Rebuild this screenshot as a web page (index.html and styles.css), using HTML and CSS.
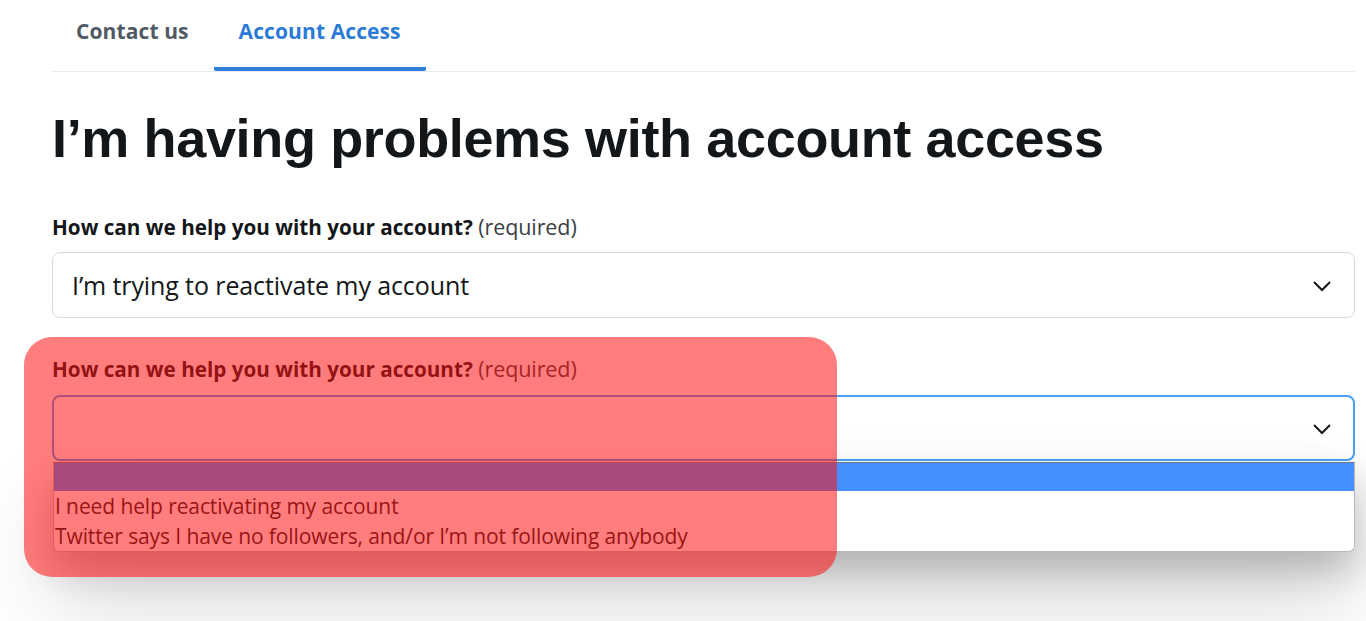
FILE: index.html
```html
<!DOCTYPE html>
<html lang="en">
    <head>
        <meta charset="utf-8">
        <link rel="stylesheet" href="styles.css">
    </head>
    <body>
        <div class="page">
            <nav class="tabs">
                <a href="#" class="tab">Contact us</a>
                <a href="#" class="tab active">Account Access</a>
            </nav>

            <h1 class="title">I’m having problems with account access</h1>

            <div class="field">
                <label class="label"><b>How can we help you with your account?</b> (required)</label>
                <div class="select">
                    <span class="value">I’m trying to reactivate my account</span>
                    <svg class="chevron" width="20" height="12" viewBox="0 0 20 12"><path d="M2 2 L10 10 L18 2" fill="none" stroke="#14171a" stroke-width="2"/></svg>
                </div>
            </div>

            <div class="field open">
                <label class="label"><b>How can we help you with your account?</b> (required)</label>
                <div class="select focus">
                    <span class="value"></span>
                    <svg class="chevron" width="20" height="12" viewBox="0 0 20 12"><path d="M2 2 L10 10 L18 2" fill="none" stroke="#14171a" stroke-width="2"/></svg>
                </div>
                <ul class="options">
                    <li class="current"></li>
                    <li>I need help reactivating my account</li>
                    <li>Twitter says I have no followers, and/or I’m not following anybody</li>
                </ul>
            </div>

            <div class="mark"></div>
        </div>
    </body>
</html>
```

FILE: styles.css
```css
* {
    margin: 0;
    padding: 0;
    box-sizing: border-box;
}
html, body {
    height: 100%;
}
body {
    background: #fff;
    font-family: "Open Sans", "Noto Sans", sans-serif;
    color: #14171a;
}
ul {
    list-style: none;
}
.page {
    position: relative;
    min-height: 100%;
    padding: 0 11px 0 52px;
}
.tabs {
    display: flex;
    border-bottom: 1px solid #e6ecf0;
}
.tab {
    display: block;
    padding: 16px 25px 21px 24px;
    font-size: 21px;
    line-height: 30px;
    font-weight: 700;
    color: #4f5a65;
    text-decoration: none;
    border-bottom: 4px solid transparent;
    letter-spacing: 0.1px;
}
.tab.active {
    padding-left: 25px;
    color: #2b7bd6;
    border-bottom-color: #2e7dd7;
    border-radius: 0 0 2px 2px;
}
.title {
    margin-top: 34px;
    font-family: "Liberation Sans", Arial, sans-serif;
    font-size: 54px;
    line-height: 64px;
    letter-spacing: -0.35px;
    font-weight: 700;
    color: #14171a;
}
.field {
    margin-top: 44px;
}
.field + .field {
    margin-top: 38px;
}
.label {
    display: block;
    font-size: 21.5px;
    line-height: 26px;
    color: #3a4046;
    letter-spacing: -0.1px;
}
.label b {
    color: #14171a;
    font-size: 20.7px;
    letter-spacing: 0;
}
.select {
    display: flex;
    align-items: center;
    justify-content: space-between;
    height: 66px;
    margin-top: 12px;
    padding: 0 22px 0 19px;
    border: 1px solid #d4dbe0;
    border-radius: 8px;
    font-size: 25px;
    letter-spacing: -0.1px;
}
.select.focus {
    border: 2px solid #4c9ff2;
    padding: 0 21px 0 18px;
    margin-top: 13px;
}
.chevron {
    margin-top: 2px;
}
.options {
    margin: 1px 0 0 1px;
    border: 1px solid #b9b9b9;
    border-top: 1px solid #6f7780;
    border-radius: 0 0 6px 6px;
    background: #fff;
    box-shadow: 0 18px 36px rgba(0, 0, 0, 0.22), 0 50px 90px rgba(0, 0, 0, 0.16);
    overflow: hidden;
}
.options li {
    height: 30px;
    line-height: 30px;
    padding-left: 1px;
    font-size: 21px;
    letter-spacing: -0.1px;
    color: #202020;
}
.options li.current {
    height: 28px;
    background: #4590fe;
}
.mark {
    position: absolute;
    left: 24px;
    top: 337px;
    width: 813px;
    height: 240px;
    border-radius: 28px;
    background: rgba(255, 14, 14, 0.54);
}
```
